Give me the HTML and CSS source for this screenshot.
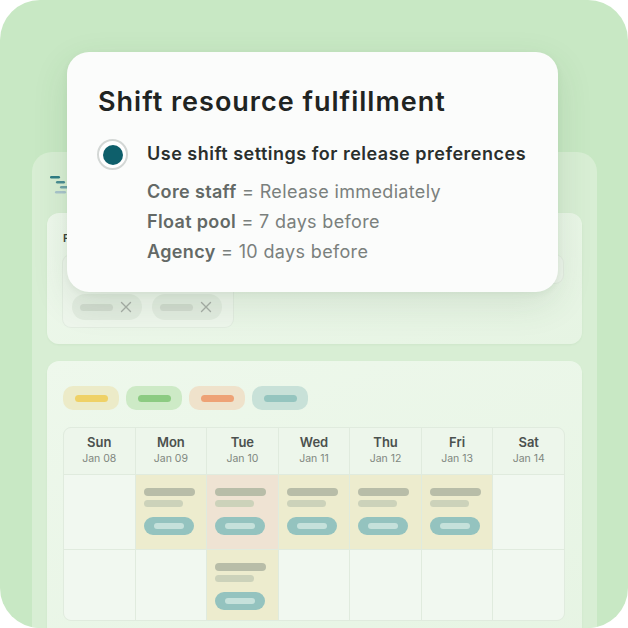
FILE: index.html
```html
<!DOCTYPE html>
<html lang="en">
<head>
    <meta charset="UTF-8">
    <meta name="viewport" content="width=device-width, initial-scale=1.0">
    <title>Shift resource fulfillment</title>
    <link rel="stylesheet" href="styles.css">
</head>
<body>
    <div class="tile">
        <div class="app">
            <div class="logo">
                <svg width="20" height="20" viewBox="0 0 20 20">
                    <rect x="0" y="1" width="10" height="2.5" rx="1.2" fill="#2f7c84"/>
                    <rect x="6" y="6" width="9" height="2.5" rx="1.2" fill="#4a8c93"/>
                    <rect x="10" y="11" width="8" height="2.5" rx="1.2" fill="#6fa3a9"/>
                    <rect x="5" y="16" width="11" height="2.5" rx="1.2" fill="#a9c4cc"/>
                </svg>
            </div>

            <section class="panel filters">
                <div class="field-label">Facility</div>
                <div class="fields">
                    <div class="field chips">
                        <span class="chip">
                            <span class="chip-bar"></span>
                            <svg width="12" height="12" viewBox="0 0 12 12"><path d="M1.5 1.5l9 9M10.5 1.5l-9 9" stroke="#a7aea7" stroke-width="1.4" stroke-linecap="round"/></svg>
                        </span>
                        <span class="chip">
                            <span class="chip-bar"></span>
                            <svg width="12" height="12" viewBox="0 0 12 12"><path d="M1.5 1.5l9 9M10.5 1.5l-9 9" stroke="#a7aea7" stroke-width="1.4" stroke-linecap="round"/></svg>
                        </span>
                    </div>
                    <div class="field select"></div>
                </div>
            </section>

            <section class="panel calendar">
                <div class="legend">
                    <span class="key yellow"><i></i></span>
                    <span class="key green"><i></i></span>
                    <span class="key orange"><i></i></span>
                    <span class="key teal"><i></i></span>
                </div>

                <div class="week">
                    <div class="head"><b>Sun</b><span>Jan 08</span></div>
                    <div class="head"><b>Mon</b><span>Jan 09</span></div>
                    <div class="head"><b>Tue</b><span>Jan 10</span></div>
                    <div class="head"><b>Wed</b><span>Jan 11</span></div>
                    <div class="head"><b>Thu</b><span>Jan 12</span></div>
                    <div class="head"><b>Fri</b><span>Jan 13</span></div>
                    <div class="head"><b>Sat</b><span>Jan 14</span></div>

                    <div class="day"></div>
                    <div class="day shift"><i class="l1"></i><i class="l2"></i><i class="tag"></i></div>
                    <div class="day shift peach"><i class="l1"></i><i class="l2"></i><i class="tag"></i></div>
                    <div class="day shift"><i class="l1"></i><i class="l2"></i><i class="tag"></i></div>
                    <div class="day shift"><i class="l1"></i><i class="l2"></i><i class="tag"></i></div>
                    <div class="day shift"><i class="l1"></i><i class="l2"></i><i class="tag"></i></div>
                    <div class="day"></div>

                    <div class="day"></div>
                    <div class="day"></div>
                    <div class="day shift"><i class="l1"></i><i class="l2"></i><i class="tag"></i></div>
                    <div class="day"></div>
                    <div class="day"></div>
                    <div class="day"></div>
                    <div class="day"></div>
                </div>
            </section>
        </div>

        <div class="popup">
            <h1>Shift resource fulfillment</h1>
            <div class="option">
                <span class="radio"></span>
                <div class="option-text">
                    <div class="option-title">Use shift settings for release preferences</div>
                    <div class="rule"><b>Core staff</b> = Release immediately</div>
                    <div class="rule"><b>Float pool</b> = 7 days before</div>
                    <div class="rule"><b>Agency</b> = 10 days before</div>
                </div>
            </div>
        </div>
    </div>
</body>
</html>
```

FILE: styles.css
```css
body {
    margin: 0;
    background: #fff;
    font-family: Inter, "Noto Sans", sans-serif;
}
.tile {
    position: relative;
    width: 628px;
    height: 628px;
    border-radius: 40px;
    overflow: hidden;
    background: #c8e8c4;
    padding: 152px 0 0 32px;
    box-sizing: border-box;
}

/* app window behind the dialog */
.app {
    width: 565px;
    height: 520px;
    box-sizing: border-box;
    padding: 23px 15px 0;
    border-radius: 20px;
    background: #d8eed4;
}
.logo {
    height: 20px;
    padding-left: 3px;
    margin-bottom: 18px;
}
.logo svg {
    display: block;
}
.panel {
    border-radius: 12px;
    background: linear-gradient(160deg, #eef8ec, #e6f4e3);
    box-shadow: 0 1px 2px rgba(90, 140, 90, 0.08);
}
.filters {
    height: 131px;
    box-sizing: border-box;
    padding: 18px 19px 0 16px;
    margin-bottom: 17px;
}
.field-label {
    font-size: 11px;
    font-weight: 600;
    line-height: 14px;
    color: #3c423f;
    margin-bottom: 10px;
}
.fields {
    display: flex;
    gap: 17px;
    align-items: flex-start;
}
.field {
    border-radius: 8px;
    background: #eef6ec;
    box-shadow: 0 0 0 1px #e2ece0;
}
.chips {
    width: 170px;
    height: 72px;
    box-sizing: border-box;
    padding: 0 9px 7px;
    display: flex;
    gap: 10px;
    align-items: flex-end;
}
.chip {
    width: 70px;
    height: 26px;
    box-sizing: border-box;
    padding: 0 8px;
    border-radius: 13px;
    background: #e2ece0;
    display: flex;
    align-items: center;
    gap: 7px;
}
.chip-bar {
    width: 33px;
    height: 7px;
    border-radius: 4px;
    background: #d1dbcf;
}
.select {
    flex: 1;
    height: 28px;
}

.calendar {
    height: 300px;
    padding: 25px 17px 0 16px;
    box-sizing: border-box;
}
.legend {
    display: flex;
    gap: 7px;
    margin-bottom: 17px;
}
.key {
    width: 56px;
    height: 24px;
    border-radius: 10px;
    display: flex;
    align-items: center;
    justify-content: center;
}
.key i {
    width: 33px;
    height: 7px;
    border-radius: 4px;
}
.key.yellow { background: #ecebc8; }
.key.yellow i { background: #efd166; }
.key.green { background: #cdeac6; }
.key.green i { background: #8ccb82; }
.key.orange { background: #efe2cb; }
.key.orange i { background: #eea276; }
.key.teal { background: #c8e1d8; }
.key.teal i { background: #95c5bf; }

.week {
    display: grid;
    grid-template-columns: repeat(7, 1fr);
    grid-template-rows: 46px 74px 70px;
    border-radius: 8px;
    overflow: hidden;
    border: 1px solid #e0ebde;
    background: #e0ebde;
    gap: 1px;
}
.head {
    background: #edf6eb;
    text-align: center;
    padding-top: 5px;
}
.head b {
    display: block;
    font-size: 13px;
    font-weight: 600;
    color: #4b514e;
    line-height: 18px;
}
.head span {
    display: block;
    font-size: 10.5px;
    color: #80877f;
    line-height: 16px;
}
.day {
    background: #f1f8f0;
}
.shift {
    background: #edecce;
    padding: 13px 0 0 8px;
    display: flex;
    flex-direction: column;
    align-items: flex-start;
}
.shift.peach {
    background: #efe3d3;
}
.shift i {
    display: block;
    border-radius: 4px;
}
.shift .l1 {
    width: 51px;
    height: 8px;
    background: #b8bda8;
    margin-bottom: 4px;
}
.shift .l2 {
    width: 39px;
    height: 7px;
    background: #ccd2ba;
    margin-bottom: 10px;
}
.shift .tag {
    width: 50px;
    height: 18px;
    border-radius: 9px;
    background: #94c3bf;
    position: relative;
}
.shift .tag::after {
    content: "";
    position: absolute;
    left: 10px;
    top: 6px;
    width: 30px;
    height: 6px;
    border-radius: 3px;
    background: #c5e1db;
}

/* release preferences dialog */
.popup {
    position: absolute;
    left: 67px;
    top: 52px;
    width: 491px;
    height: 240px;
    box-sizing: border-box;
    padding: 33px 10px 0 30px;
    border-radius: 22px;
    background: #fbfcfb;
    box-shadow: 0 12px 36px rgba(50, 90, 50, 0.12), 0 2px 6px rgba(50, 90, 50, 0.06);
}
.popup h1 {
    margin: 0 0 23px 1px;
    font-size: 27px;
    line-height: 34px;
    font-weight: 600;
    color: #1f2422;
    letter-spacing: 1px;
    white-space: nowrap;
}
.option {
    display: flex;
    gap: 19px;
    align-items: flex-start;
}
.radio {
    flex: none;
    width: 31px;
    height: 31px;
    box-sizing: border-box;
    border-radius: 50%;
    border: 2px solid #d3d7d5;
    background: #fff;
    display: flex;
    align-items: center;
    justify-content: center;
    margin-top: -3px;
}
.radio::after {
    content: "";
    width: 20px;
    height: 20px;
    border-radius: 50%;
    background: #0e5f6b;
}
.option-title {
    font-size: 18px;
    font-weight: 600;
    line-height: 24px;
    color: #2a2f2d;
    letter-spacing: 0.5px;
    white-space: nowrap;
    margin-bottom: 11px;
}
.rule {
    font-size: 18px;
    line-height: 30px;
    color: #7a807d;
    letter-spacing: 0.35px;
}
.rule b {
    font-weight: 600;
    color: #636966;
}
```
